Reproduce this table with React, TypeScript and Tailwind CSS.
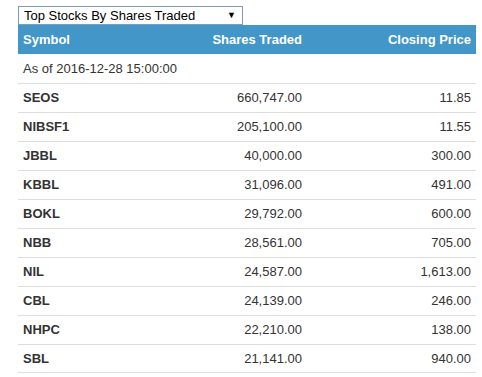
import React from "react";

const rows: [string, string, string][] = [
  ["SEOS", "660,747.00", "11.85"],
  ["NIBSF1", "205,100.00", "11.55"],
  ["JBBL", "40,000.00", "300.00"],
  ["KBBL", "31,096.00", "491.00"],
  ["BOKL", "29,792.00", "600.00"],
  ["NBB", "28,561.00", "705.00"],
  ["NIL", "24,587.00", "1,613.00"],
  ["CBL", "24,139.00", "246.00"],
  ["NHPC", "22,210.00", "138.00"],
  ["SBL", "21,141.00", "940.00"],
];

export default function App() {
  return (
    <div
      className="w-[482px] h-[377px] bg-white overflow-hidden pl-[18px] pr-[6px] text-[13px] text-[#333]"
      style={{ fontFamily: '"Liberation Sans", Arial, sans-serif' }}
    >
      <div className="mt-[6px] w-[225px] h-[19px] border border-[#7f9db9] bg-white flex items-center justify-between pl-[5px] pr-[6px] leading-[17px] text-black">
        <span>Top Stocks By Shares Traded</span>
        <span className="text-[9px] leading-none">▼</span>
      </div>
      <div className="w-[458px]">
        <div className="grid grid-cols-[150px_139px_169px] h-[29px] items-center bg-[#4396c8] text-white font-bold px-0">
          <div className="pl-[5px]">Symbol</div>
          <div className="text-right pr-[5px]">Shares Traded</div>
          <div className="text-right pr-[5px]">Closing Price</div>
        </div>
        <div className="h-[29px] flex items-center pl-[5px]">As of 2016-12-28 15:00:00</div>
        {rows.map((r, i) => (
          <div
            key={r[0]}
            className={`grid grid-cols-[150px_139px_169px] h-[29px] items-center border-t border-[#dddddd] ${
              i === rows.length - 1 ? "border-b" : ""
            }`}
          >
            <div className="pl-[5px] font-bold">{r[0]}</div>
            <div className="text-right pr-[5px]">{r[1]}</div>
            <div className="text-right pr-[5px]">{r[2]}</div>
          </div>
        ))}
      </div>
    </div>
  );
}
